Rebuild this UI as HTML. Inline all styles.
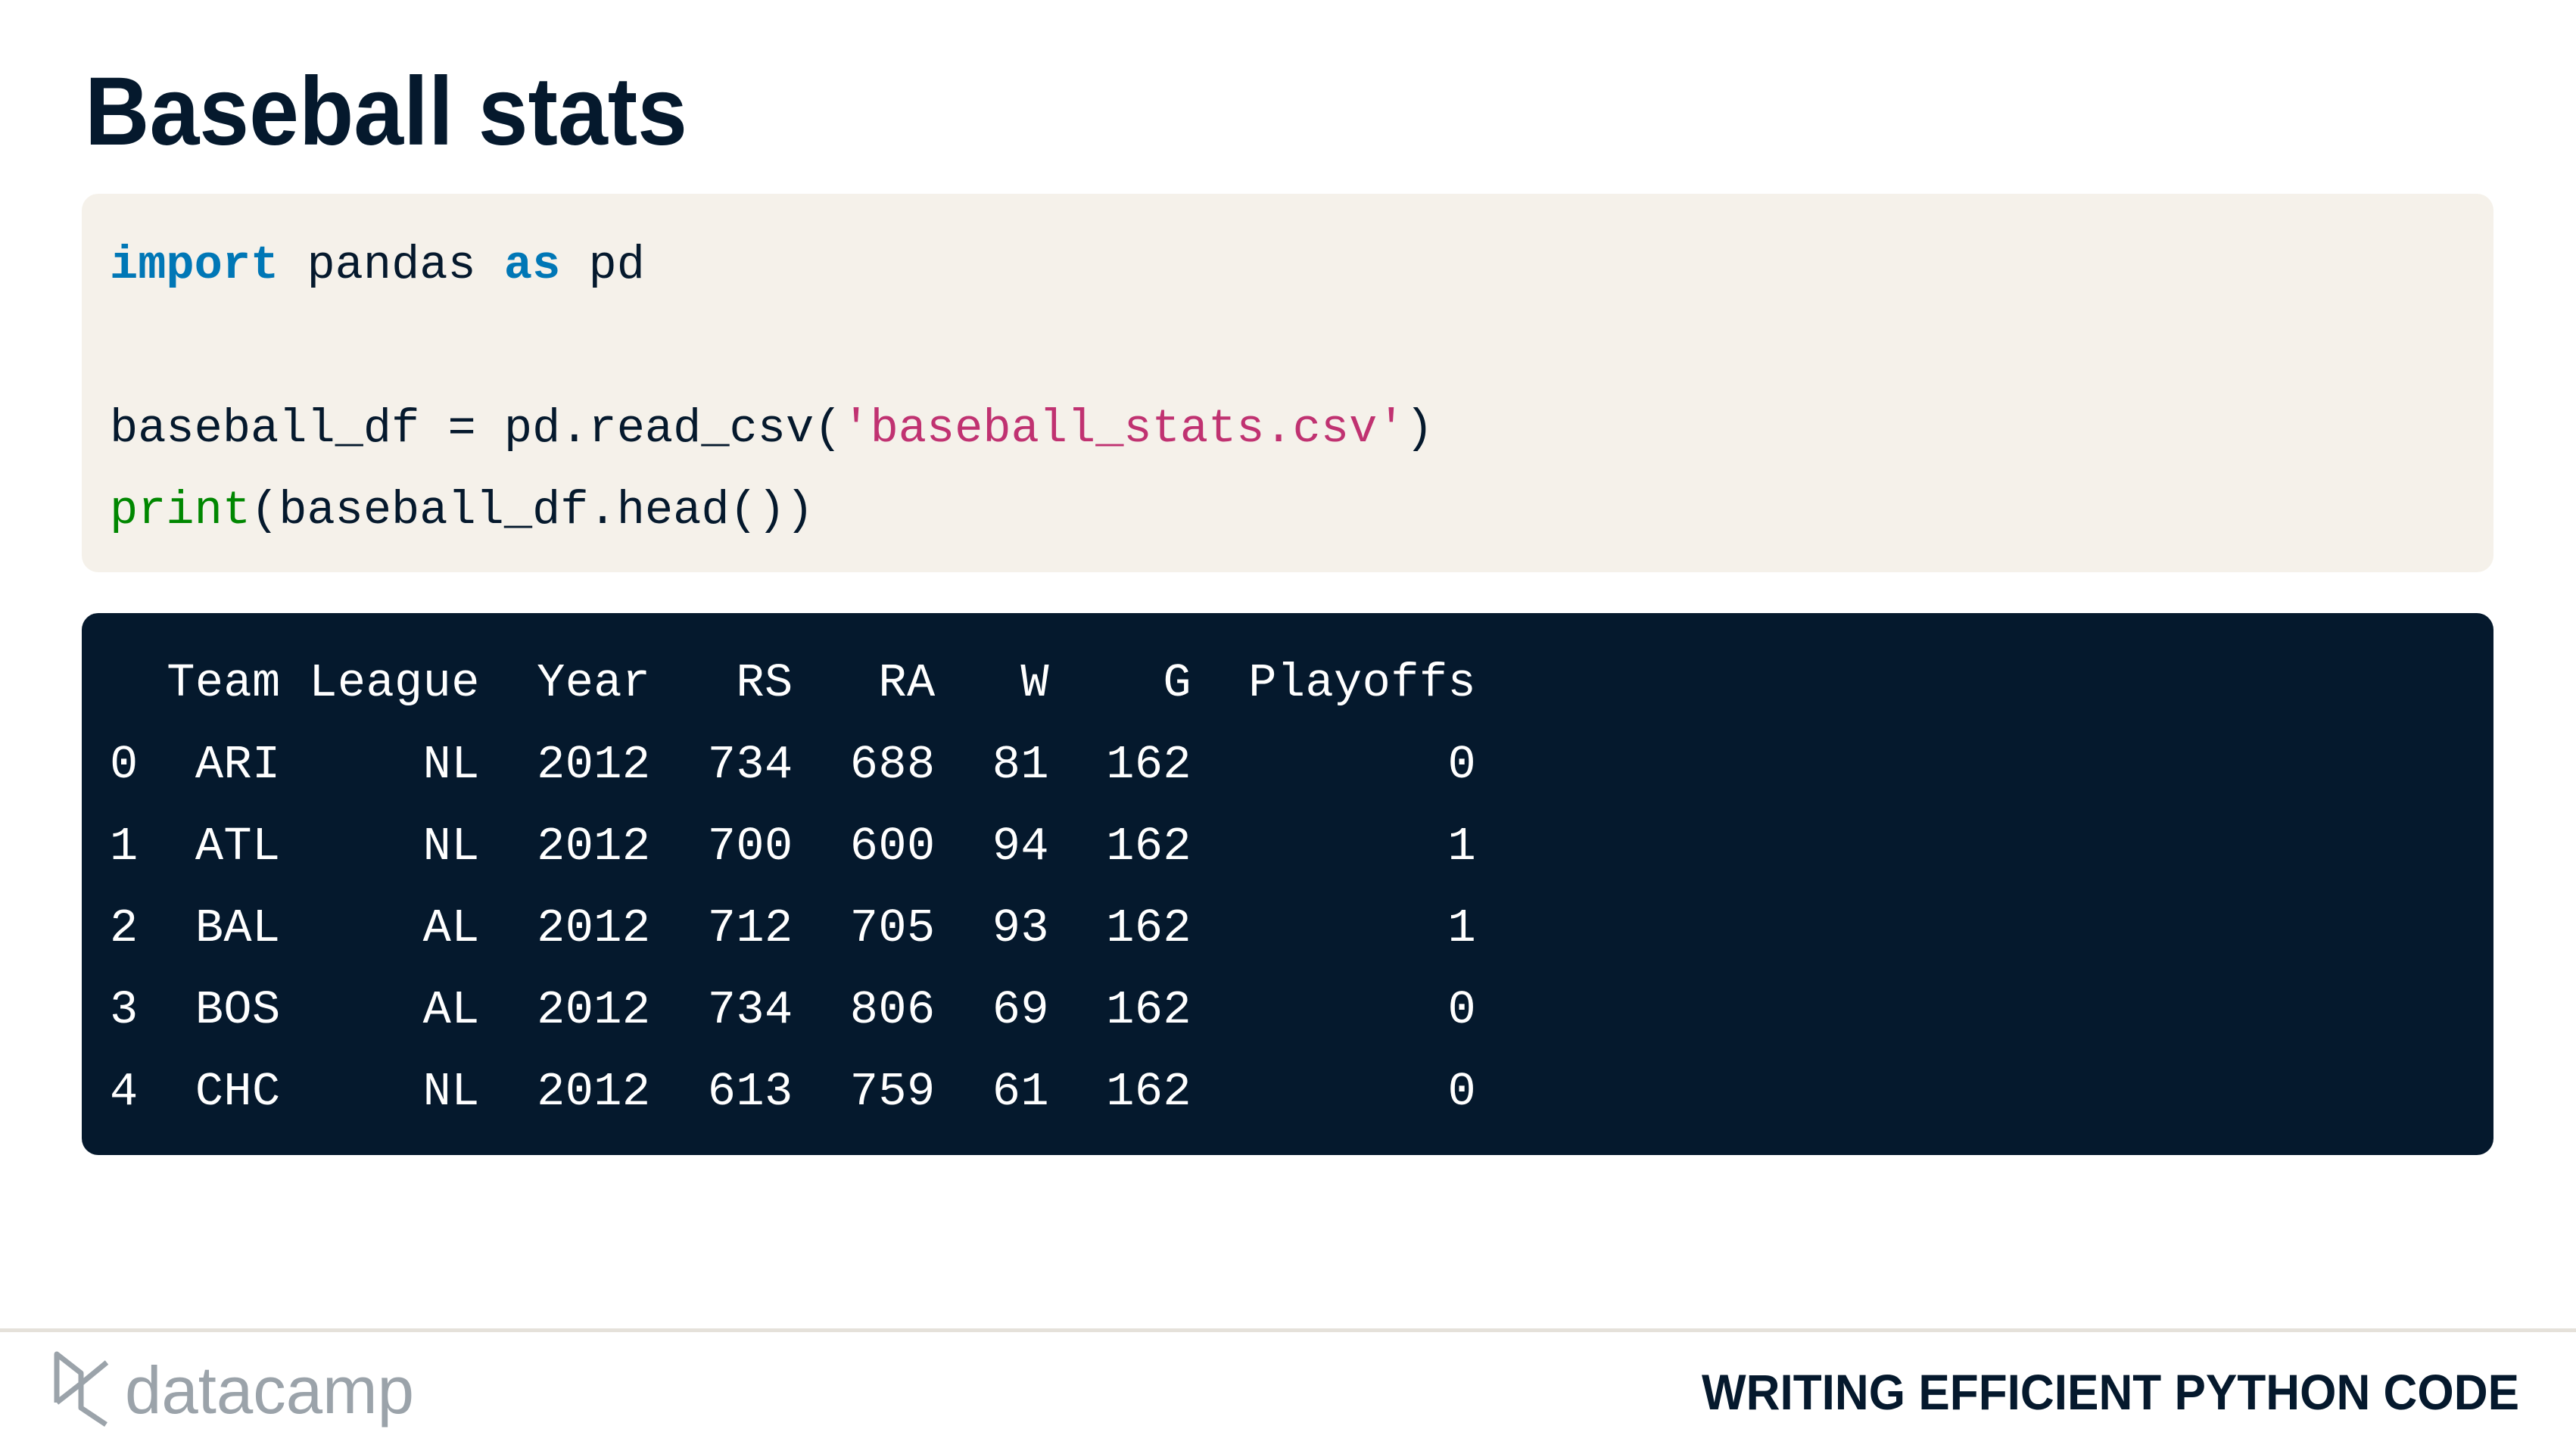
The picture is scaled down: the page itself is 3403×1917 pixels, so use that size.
<!DOCTYPE html>
<html><head><meta charset="utf-8">
<style>
html,body{margin:0;padding:0;background:#fff;}
body{width:3403px;height:1917px;position:relative;overflow:hidden;font-family:"Liberation Sans",sans-serif;}
.box{position:absolute;left:108px;width:3186px;border-radius:22px;}
pre{margin:0;position:absolute;font-family:"Liberation Mono",monospace;font-size:62px;line-height:108px;white-space:pre;}
.k{color:#0077b6;font-weight:bold}
.s{color:#c03271}
.f{color:#008700}
</style></head><body>
<svg style="position:absolute;left:0;top:0" width="3403" height="1917">
<text x="112" y="191" font-family="Liberation Sans" font-weight="bold" font-size="128" fill="#05192d" textLength="796" lengthAdjust="spacingAndGlyphs">Baseball stats</text>
<text x="2248" y="1862" font-family="Liberation Sans" font-weight="bold" font-size="66" fill="#05192d" textLength="1080" lengthAdjust="spacingAndGlyphs">WRITING EFFICIENT PYTHON CODE</text>
<text x="165" y="1867" font-family="Liberation Sans" font-size="88" fill="#9ba3aa" textLength="382" lengthAdjust="spacingAndGlyphs">datacamp</text>
<g fill="none" stroke="#9ba3aa" stroke-width="7" stroke-linejoin="round" stroke-linecap="butt">
<path d="M75 1853 L75 1789 L107 1814 L107 1860 L140 1882"/>
<path d="M75 1853 L107 1828 L141 1800"/>
</g>
</svg>
<div style="position:absolute;left:0;top:1755px;width:3403px;height:5px;background:#e5e1da"></div>
<div class="box" style="top:256px;height:500px;background:#f5f1ea"></div>
<pre style="left:145px;top:297px;color:#05192d"><span class="k">import</span> pandas <span class="k">as</span> pd

baseball_df = pd.read_csv(<span class="s">'baseball_stats.csv'</span>)
<span class="f">print</span>(baseball_df.head())</pre>
<div class="box" style="top:810px;height:716px;background:#05192d"></div>
<pre style="left:145px;top:849px;color:#fff;letter-spacing:0.4px">  Team League  Year   RS   RA   W    G  Playoffs
0  ARI     NL  2012  734  688  81  162         0
1  ATL     NL  2012  700  600  94  162         1
2  BAL     AL  2012  712  705  93  162         1
3  BOS     AL  2012  734  806  69  162         0
4  CHC     NL  2012  613  759  61  162         0</pre>
</body></html>
